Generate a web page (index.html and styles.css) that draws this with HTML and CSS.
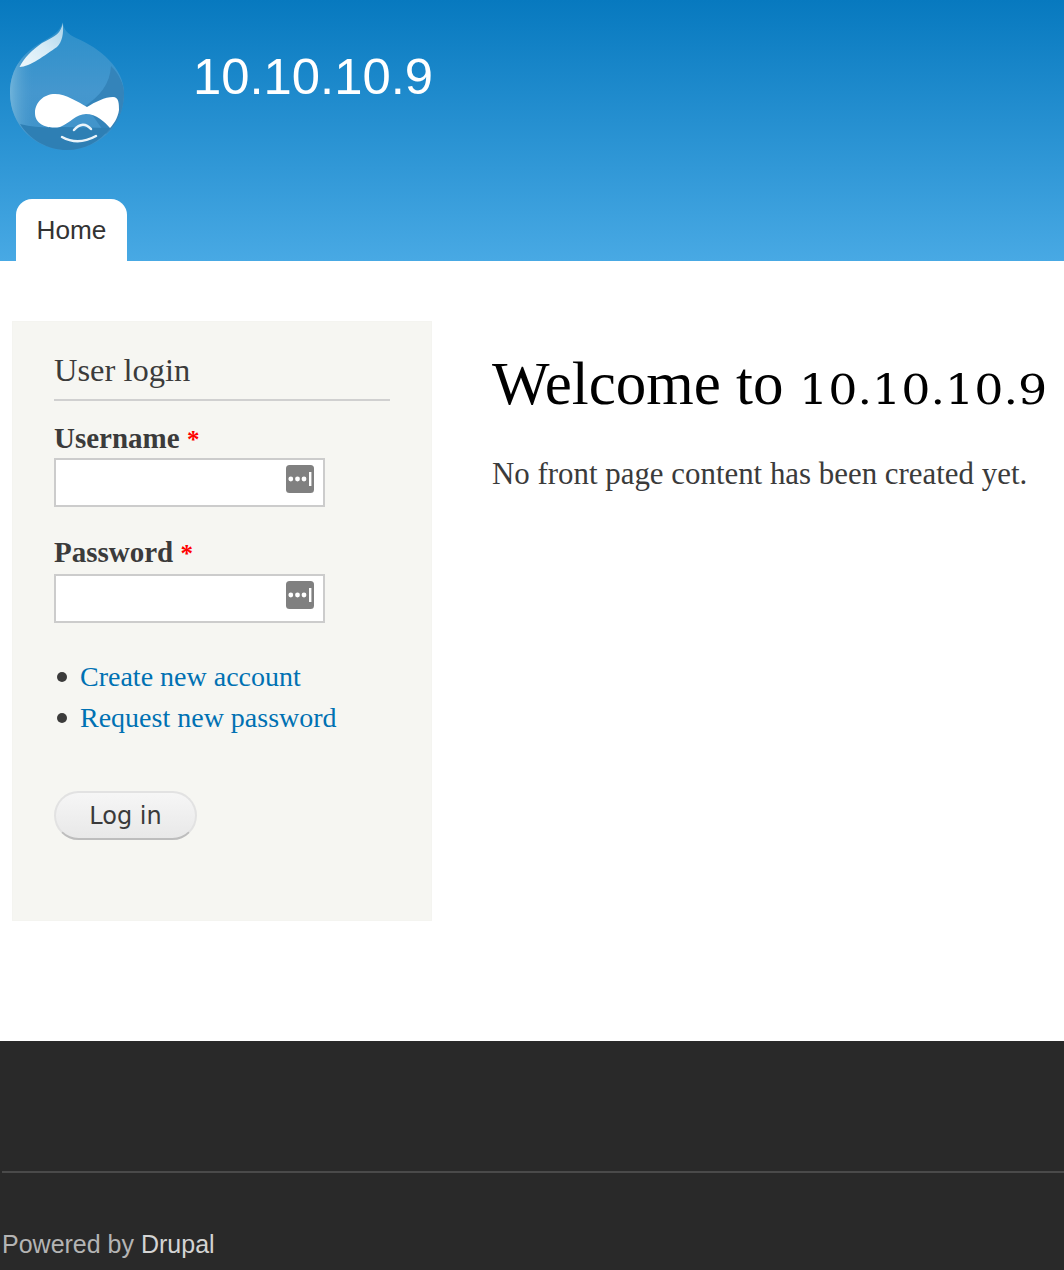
FILE: index.html
```html
<!DOCTYPE html>
<html lang="en">
<head>
<meta charset="utf-8">
<title>Welcome to 10.10.10.9</title>
<link rel="stylesheet" href="styles.css">
</head>
<body>
<header class="site-header">
  <div class="branding">
    <svg class="logo" viewBox="10 21 116 130" width="116" height="130" aria-hidden="true">
      <defs>
        <linearGradient id="drop" x1="0" y1="0" x2="0" y2="1">
          <stop offset="0" stop-color="#2a8fca"/>
          <stop offset="0.55" stop-color="#4597ce"/>
          <stop offset="1" stop-color="#3f92c8"/>
        </linearGradient>
        <linearGradient id="rim" x1="0" y1="0" x2="1" y2="0">
          <stop offset="0" stop-color="#6fb3da"/>
          <stop offset="0.2" stop-color="#4a9bcf" stop-opacity="0"/>
        </linearGradient>
        <linearGradient id="shine" x1="1" y1="0" x2="0" y2="1">
          <stop offset="0" stop-color="#a9d3ea"/>
          <stop offset="0.5" stop-color="#d6ebf6"/>
          <stop offset="1" stop-color="#eef7fb"/>
        </linearGradient>
      </defs>
      <path d="M62.7 22C63.5 30 68 34 76 38C100 48 124 68 124 93C124 128 96 150 67 150C36 150 10 126 10 93C10 68 24 52 42 42C52 36 60 32 62.7 22Z" fill="url(#drop)"/>
      <path d="M62.7 22C63.5 30 68 34 76 38C100 48 124 68 124 93C124 128 96 150 67 150C36 150 10 126 10 93C10 68 24 52 42 42C52 36 60 32 62.7 22Z" fill="url(#rim)"/>
      <path d="M84 107C100 96 110 84 111 66C119 74 124 84 124 93C124 110 118 124 106 134C98 124 92 112 84 107Z" fill="#3484ba"/>
      <path d="M20 124C36 128 50 128 62 127L110 128C100 142 84 150 67 150C48 150 30 140 20 124Z" fill="#2e7fb4"/>
      <path d="M62.7 23C61 33 56 36 42 43C32 50 24 58 19.500 67C30 67 45 55 57 47C62 42 64 34 62.700 23Z" fill="url(#shine)"/>
      <path d="M87 107C95 102 105 97 113 97C119 97 119 104 119 110C118 118 113 125 110 128C105 122 96 114 86 114C76 114 70 123 60 127C50 129 35 126 35 113C35 102 44 94 55 94C66 94 78 102 87 107Z" fill="#fff"/>
      <path d="M62 137Q78 146 96 136" fill="none" stroke="#eaf4fa" stroke-width="2.500" stroke-linecap="round"/>
      <path d="M74 130Q83 120 91 129" fill="none" stroke="#eaf4fa" stroke-width="2.500" stroke-linecap="round"/>
    </svg>
    <a class="site-name" href="#">10.10.10.9</a>
  </div>
  <nav class="tabs"><a class="tab" href="#">Home</a></nav>
</header>

<div class="content">
  <aside class="sidebar">
    <h2 class="block-title">User login</h2>
    <form class="login">
      <label class="field-label">Username <span class="req">*</span></label>
      <div class="input">
        <svg class="key" viewBox="0 0 28 28" width="28" height="28" aria-hidden="true"><rect width="28" height="28" rx="3.500" fill="#808080"/><circle cx="4.800" cy="14" r="2.400" fill="#fff"/><circle cx="11.500" cy="14" r="2.400" fill="#fff"/><circle cx="18" cy="14" r="2.400" fill="#fff"/><rect x="23" y="7" width="2.400" height="14" fill="#fff"/></svg>
      </div>
      <label class="field-label second">Password <span class="req">*</span></label>
      <div class="input">
        <svg class="key" viewBox="0 0 28 28" width="28" height="28" aria-hidden="true"><rect width="28" height="28" rx="3.500" fill="#808080"/><circle cx="4.800" cy="14" r="2.400" fill="#fff"/><circle cx="11.500" cy="14" r="2.400" fill="#fff"/><circle cx="18" cy="14" r="2.400" fill="#fff"/><rect x="23" y="7" width="2.400" height="14" fill="#fff"/></svg>
      </div>
      <ul class="links">
        <li><a href="#">Create new account</a></li>
        <li><a href="#">Request new password</a></li>
      </ul>
      <button class="btn" type="button">Log in</button>
    </form>
  </aside>
  <main class="main">
    <h1 class="page-title">Welcome to <span class="digits">10.10.10.9</span></h1>
    <p class="empty">No front page content has been created yet.</p>
  </main>
</div>

<footer class="site-footer">
  <div class="rule"></div>
  <p class="powered">Powered by <a href="#">Drupal</a></p>
</footer>
</body>
</html>
```
FILE: styles.css
```css
* { box-sizing: border-box; }
html, body { margin: 0; padding: 0; }
body {
  background: #fff;
  color: #3b3b3b;
  font-family: "Liberation Serif", "Times New Roman", serif;
  overflow-x: hidden;
}
a { text-decoration: none; }

.site-header {
  height: 261px;
  display: flex;
  flex-direction: column;
  justify-content: space-between;
  background: linear-gradient(to bottom, #0779bf, #48a9e4);
}
.branding {
  display: flex;
  align-items: flex-start;
  padding: 21px 0 0 10px;
}
.logo { display: block; flex: none; filter: blur(0.4px); }
.site-name {
  margin: 26px 0 0 67px;
  color: #fff;
  font: 50.800px/60px "Liberation Sans", Arial, sans-serif;
}
.tabs { display: flex; padding-left: 16px; }
.tab {
  display: block;
  width: 111px;
  height: 62px;
  background: #fff;
  border-radius: 16px 16px 0 0;
  color: #333;
  font: 26.200px/62px "Liberation Sans", Arial, sans-serif;
  text-align: center;
}

.content { display: flex; align-items: flex-start; padding: 60px 0 120px 12px; }
.sidebar {
  flex: none;
  width: 420px;
  height: 600px;
  padding: 27px 41px 0;
  background: #f6f6f2;
  border: 1px solid #f4f4f0;
}
.block-title {
  margin: 0 0 17px;
  padding-bottom: 8px;
  border-bottom: 2px solid #d0d0d0;
  font-size: 32.500px;
  font-weight: 400;
  line-height: 42px;
}
.login { display: block; }
.field-label {
  display: block;
  font-size: 29px;
  font-weight: 700;
  line-height: 40px;
}
.field-label.second { margin-top: 25px; padding-bottom: 2px; }
.req { color: #f00; font-size: 25px; line-height: 1; }
.input {
  display: flex;
  align-items: flex-start;
  justify-content: flex-end;
  width: 271px;
  height: 49px;
  padding: 5px 9px 0 0;
  background: #fff;
  border: 2px solid #ccc;
}
.key { display: block; }
.links {
  margin: 33px 0 0;
  padding: 0;
  list-style: none;
  font-size: 28px;
  line-height: 41px;
}
.links li { display: flex; align-items: center; }
.links li::before {
  content: "";
  flex: none;
  width: 10px;
  height: 10px;
  margin: 0 13px 0 3px;
  border-radius: 50%;
  background: #3b3b3b;
}
.links a { color: #0071b3; }
.btn {
  display: block;
  width: 143px;
  height: 49px;
  margin-top: 53px;
  padding: 0;
  background: linear-gradient(to bottom, #f6f6f6, #e8e8e8);
  border: 2px solid #e2e2e2;
  border-bottom-color: #bdbdbd;
  border-radius: 25px;
  color: #3a3a3a;
  font: 24px/1 "DejaVu Sans", sans-serif;
}

.main { margin-left: 60px; }
.page-title {
  margin: 30px 0 0;
  color: #000;
  font-size: 61px;
  font-weight: 400;
  line-height: 66px;
  white-space: nowrap;
}
.digits {
  display: inline-block;
  font-family: "DejaVu Serif", serif;
  font-size: 41px;
  line-height: 1;
  transform: scaleX(1.12);
  transform-origin: left;
}
.empty {
  margin: 39px 0 0;
  font-size: 30.900px;
  line-height: 36px;
  white-space: nowrap;
}

.site-footer {
  height: 229px;
  padding: 130px 0 0 2px;
  background: #292929;
}
.rule { height: 2px; background: #4a4a4a; }
.powered {
  margin: 53px 0 0;
  color: #b4b4b4;
  font: 25px/36px "Liberation Sans", Arial, sans-serif;
}
.powered a { color: #d4d4d4; }
```
